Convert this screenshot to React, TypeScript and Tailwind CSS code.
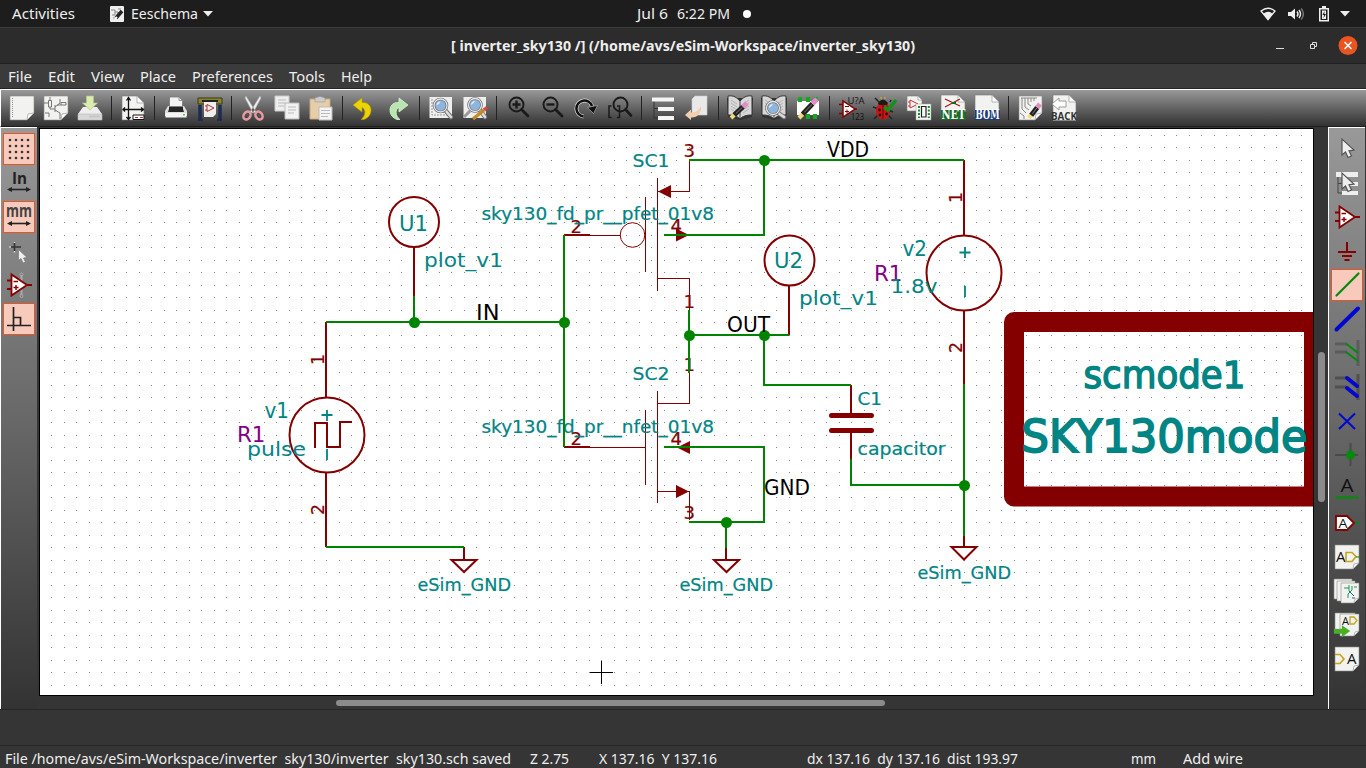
import React from "react";

const RED = "#840000";
const GREEN = "#008400";
const TEAL = "#008484";

function Ico({ children }: { children: React.ReactNode }) {
  return (
    <svg viewBox="0 0 26 26" className="h-[26px] w-[26px] shrink-0 overflow-visible" fill="none">
      {children}
    </svg>
  );
}

function Page({ x = 1, y = 1, w = 24, h = 24, fold = 7, fill = "#f2f2f0" }) {
  const r = x + w;
  const b = y + h;
  return (
    <g>
      <path d={`M${x} ${y}H${r}V${b - fold}L${r - fold} ${b}H${x}Z`} fill={fill} stroke="#8a8a88" strokeWidth=".6" />
      <path d={`M${r} ${b - fold}L${r - fold} ${b}L${r - fold + 1} ${b - fold + 1}Z`} fill="#fff" stroke="#999" strokeWidth=".7" />
    </g>
  );
}

function PageTop({ x = 1, y = 1, w = 24, h = 24, fold = 7 }) {
  const r = x + w;
  const b = y + h;
  return (
    <g>
      <path d={`M${x} ${y}H${r - fold}L${r} ${y + fold}V${b}H${x}Z`} fill="#f2f2f0" stroke="#777" strokeWidth=".6" />
      <path d={`M${r - fold} ${y}V${y + fold}H${r}Z`} fill="#fff" stroke="#999" strokeWidth=".7" />
    </g>
  );
}

function Pencil({ x1 = 5, y1 = 22, x2 = 20, y2 = 7, body = "#222" }) {
  const dx = x2 - x1;
  const dy = y2 - y1;
  return (
    <g strokeLinecap="butt">
      <path d={`M${x1} ${y1}L${x1 + dx * 0.25} ${y1 + dy * 0.25}`} stroke="#f2dc7a" strokeWidth="4" />
      <path d={`M${x1 + dx * 0.2} ${y1 + dy * 0.2}L${x1 + dx * 0.75} ${y1 + dy * 0.75}`} stroke={body} strokeWidth="5" />
      <path d={`M${x1 + dx * 0.3} ${y1 + dy * 0.3}L${x1 + dx * 0.72} ${y1 + dy * 0.72}`} stroke="#777" strokeWidth="1" />
      <path d={`M${x1 + dx * 0.75} ${y1 + dy * 0.75}L${x2} ${y2}`} stroke="#e58cc8" strokeWidth="5" />
    </g>
  );
}

function Lens({ x = 12, y = 10, r = 6.5 }) {
  return (
    <g>
      <path d={`M${x + r * 0.7} ${y + r * 0.7}L23 22`} stroke="#777" strokeWidth="4.5" strokeLinecap="round" />
      <path d={`M${x + r * 0.7} ${y + r * 0.7}L23 22`} stroke="#ddd" strokeWidth="2.5" strokeLinecap="round" />
      <circle cx={x} cy={y} r={r} fill="#8fb5df" stroke="#666" strokeWidth="2.6" />
      <circle cx={x} cy={y} r={r} stroke="#e8e8e8" strokeWidth="1.3" />
      <path d={`M${x - 4} ${y}a4 4 0 0 1 4-4a7 7 0 0 1-4 4`} fill="#dcebfa" />
    </g>
  );
}

const Book = () => (
  <g>
    <path d="M0 3L1 22L13 25L25 22L26 3Z" fill="#333" />
    <path d="M1 1C7 0 10 3 13 6C16 3 19 0 25 1V20C19 20 16 21 13 24C10 21 7 20 1 20Z" fill="#d8d8d8" stroke="#333" strokeWidth="1" />
    <path d="M13 6V23" stroke="#444" />
    <path d="M4 5L10 9M4 8L10 12M4 11L10 15M22 5L16 9M22 8L16 12M22 11L16 15M4 14L10 18M22 14L16 18" stroke="#aaa" strokeWidth=".8" />
  </g>
);

const OpAmp = () => (
  <g>
    <path d="M1 8.5H6M1 17H6M18 13H26" stroke={RED} strokeWidth="2" />
    <path d="M5.5 2.5V23.5L21 13Z" fill="#fff" stroke={RED} strokeWidth="1.8" />
    <path d="M7.5 9.5H12M7.5 15.5H12.5M10 13V18" stroke={RED} strokeWidth="1.4" />
  </g>
);

const Arrow = () => (
  <path d="M8 3V19L11.5 16L14 21.5L17.5 20L15 14.8L20 14Z" fill="#eee" stroke="#555" strokeWidth="1.2" />
);

const Label = ({ x, y, s, children, fill = "#111", b = false, w }: { x: number; y: number; s: number; children: string; fill?: string; b?: boolean; w?: number }) => (
  <text x={x} y={y} fontSize={s} fill={fill} fontWeight={b ? 700 : 400} textLength={w} lengthAdjust="spacingAndGlyphs" fontFamily="'Open Sans', sans-serif">
    {children}
  </text>
);

const topIcons: (React.ReactNode | null)[] = [
  <><Page x={1} y={1} w={24} h={24} /><path d="M3.5 3V23" stroke="#777" strokeWidth=".8" strokeDasharray="1 1" /></>,
  <><Page x={1} y={1} w={24} h={24} /><path d="M1 8H6M7 2V5M5.500 5.500H8.500V12H5.500ZM7 12V14H12M12 10V17M12 12L17 8V4M12 15L17 18V24M2 18H6V22M14 10H18M18 7.500H23V10H18Z" stroke="#777" strokeWidth="1" /></>,
  <>
    <path d="M6 12H20L25 19H1Z" fill="#eee" />
    <path d="M1 19H25V25H1Z" fill="#d8d8d8" stroke="#bbb" strokeWidth=".6" />
    <path d="M9.500 1H16.500V8H20.500L13 15L5.500 8H9.500Z" fill="#dcebb0" stroke="#b5c98a" strokeWidth=".7" />
    <path d="M12 21.500H23" stroke="#c6c6c6" strokeWidth="2" />
  </>,
  null,
  <><PageTop x={2} y={1} w={22} h={24} /><path d="M8.500 3V24M2.500 14.500H24M6.500 5.500L8.500 2.500L10.500 5.500M6.500 22L8.500 24.500L10.500 22M5 12.500L3 14.500L5 16.500M21 12.500L23.500 14.500L21 16.500" stroke="#111" strokeWidth="1.300" /><path d="M13 20H24V24.500H13Z" fill="#fff" stroke="#111" /><path d="M15 22.500H18M20 22.500H23" stroke="#a33" /></>,
  null,
  <>
    <path d="M6.500 2H16L19.500 5.500V13H6.500Z" fill="#f3f3f3" stroke="#777" strokeWidth=".8" />
    <path d="M16 2V5.500H19.500" stroke="#999" />
    <path d="M5 11H21L24 16V21H2V16Z" fill="#ddd" />
    <path d="M6 11.500H20V14L21 17H5L6 14Z" fill="#252525" />
    <path d="M2.500 18H23.500V22.500H2.500Z" fill="#f5f5f5" />
    <path d="M20 19H22V20.500H20Z" fill="#6c3" />
  </>,
  <>
    <path d="M3 10V24M23 10V24" stroke="#1d2d50" strokeWidth="3.500" />
    <path d="M1 25H6M20 25H25" stroke="#1d2d50" strokeWidth="2" />
    <path d="M1 3H25V9H1Z" fill="#8a8430" stroke="#3c3a12" />
    <path d="M5 6H21" stroke="#222" strokeWidth="2" />
    <path d="M7 7H19V19L16 22H7Z" fill="#eee" />
    <path d="M10 9.500V16.500L17 13ZM8 11H10M8 15H10" stroke="#a33" />
  </>,
  null,
  <>
    <path d="M6 1L16 17L13 18L5 3ZM20 1L10 17L13 18L21 3Z" fill="#eee" stroke="#aaa" strokeWidth=".6" />
    <ellipse cx="7" cy="20.500" rx="3.300" ry="4.200" transform="rotate(35 7 20.500)" stroke="#e89aa0" strokeWidth="2.500" />
    <ellipse cx="19" cy="20.500" rx="3.300" ry="4.200" transform="rotate(-35 19 20.500)" stroke="#e89aa0" strokeWidth="2.500" />
  </>,
  <><path d="M1 1H15V16H1Z" fill="#eee" stroke="#ccc" /><path d="M4 5H12M4 8H12M4 11H10" stroke="#bbb" /><path d="M11 8H25V24H11Z" fill="#f2f2f2" stroke="#bbb" /><path d="M14 12H22M14 15H22M14 18H20" stroke="#bbb" /></>,
  <><path d="M2 4H22V24H2Z" fill="#e8cda9" stroke="#c4a980" /><path d="M7 3Q12 0 17 3V7H7Z" fill="#ccc" stroke="#999" strokeWidth=".6" /><path d="M11 12H24V25H11Z" fill="#f4f4f4" stroke="#bbb" /><path d="M13 15.500H22M13 18.500H22M13 21.500H20" stroke="#bbb" /></>,
  null,
  <path d="M2 10L11 3V7.500C18 7 20 12 20 15C20 20 17 23 13 24.500H10C15 21 15 14 11 12.500V17Z" fill="#edd400" stroke="#b39b00" strokeWidth=".6" />,
  <path d="M23 10L14 3V7.500C7 7 5 12 5 15C5 20 8 23 12 24.500H15C10 21 10 14 14 12.500V17Z" fill="#b9e6ae" stroke="#d8f4d2" strokeWidth=".8" />,
  null,
  <><path d="M1.500 2H24V23H1.500Z" fill="#eee" /><path d="M4 4V20H20" stroke="#999" strokeDasharray="2 1" /><Lens x={12.5} y={10.5} /></>,
  <><path d="M1.500 2H24V23H1.500Z" fill="#eee" /><path d="M2 22L8 16" stroke="#999" strokeWidth="3" /><Lens x={13} y={10} /><path d="M11 24L22 15" stroke="#c58a2a" strokeWidth="3.500" /><path d="M22 15L25 12.500" stroke="#d44" strokeWidth="3.500" /></>,
  null,
  <><circle cx="11.500" cy="9.500" r="7" stroke="#1a1a1a" strokeWidth="1.900" /><path d="M16.500 14.500L23 21" stroke="#1a1a1a" strokeWidth="2.800" strokeLinecap="round" /><path d="M7.500 9.500H15.500M11.500 5.500V13.500" stroke="#1a1a1a" strokeWidth="2.400" /></>,
  <><circle cx="11.500" cy="9.500" r="7" stroke="#1a1a1a" strokeWidth="1.900" /><path d="M16.500 14.500L23 21" stroke="#1a1a1a" strokeWidth="2.800" strokeLinecap="round" /><path d="M7.500 9.500H15.500" stroke="#1a1a1a" strokeWidth="2.400" /></>,
  <><path d="M10.500 21.500A8 8 0 1 1 19 11" stroke="#ddd" strokeWidth="4" /><path d="M10.500 21.500A8 8 0 1 1 19 11" stroke="#111" strokeWidth="2.500" /><path d="M14.500 12.500L24.500 10.500L20.500 18.500Z" fill="#111" stroke="#ccc" strokeWidth=".5" /></>,
  <><circle cx="13.500" cy="9.500" r="7" stroke="#1a1a1a" strokeWidth="1.900" /><path d="M18.500 14.500L24 20.500" stroke="#1a1a1a" strokeWidth="2.600" strokeLinecap="round" /><path d="M4.500 11H2V22.500H4.500M10 11H12.500V22.500H10" stroke="#1a1a1a" strokeWidth="1.500" /></>,
  null,
  <><path d="M4 6V23H8M4 13.500H8" stroke="#333" /><path d="M2 2.500H24V6.500H2ZM8 12H24V16H8ZM8 21H24V25H8Z" fill="#f5f5f5" /></>,
  <><path d="M11 1H23V20H8V4Z" fill="#e9e9e9" stroke="#ccc" strokeWidth=".6" /><path d="M1 20L7 14.500V17.500C11 18 15 15 17 11C18 18 13 23 7 22.500V25Z" fill="#f1cfae" /></>,
  null,
  <><Book /><Pencil x1={4} y1={23} x2={20} y2={8} /></>,
  <><Book /><Lens x={12} y={13} r={6.5} /></>,
  <><path d="M2 6H24V20H2Z" fill="#fff" /><path d="M3 2H7V7H3ZM11 2H15V7H11ZM19 2H23V7H19ZM11 19H15V24H11ZM18 19H22V24H18Z" fill="#14a81e" /><Pencil x1={4} y1={23} x2={22} y2={4} /></>,
  null,
  <><path d="M1 9.500H6M1 18.500H6M16 14H19" stroke={RED} strokeWidth="1.500" /><path d="M5 6V22L17 14Z" fill="#fff" stroke={RED} strokeWidth="1.500" /><path d="M7 11.500H11M7 16.500H11M9 14.500V18.500" stroke={RED} /><Label x={9.500} y={8.500} s={9.500} w={17}>U?A</Label><Label x={13} y={25} s={9.500} w={13}>123</Label></>,
  <>
    <path d="M1 12L7 14M2 24L7 19M20 24L15 19M3 3L8 8M18 7L19 5M21 17L16 15" stroke="#222" strokeWidth="1.500" />
    <ellipse cx="11" cy="16" rx="7" ry="8.500" fill="#d41212" />
    <path d="M6 8Q11 1 16 8L15 10H7Z" fill="#1a1a1a" /><path d="M11 9V24" stroke="#5b0808" /><path d="M9 4V2M13 4V2" stroke="#dcb400" />
    <circle cx="7.500" cy="15" r="1.400" fill="#111" /><circle cx="14.500" cy="19" r="1.400" fill="#111" /><circle cx="8" cy="20" r="1.400" fill="#111" /><circle cx="13.500" cy="13" r="1.200" fill="#111" />
    <path d="M12 12L16 15L24 5" stroke="#11921b" strokeWidth="3.500" />
  </>,
  <><PageTop x={1} y={1} w={15} h={15} fold={4} /><path d="M4 5V13L12 9ZM2 7H4M2 11H4" stroke="#c33" /><path d="M10 9H25V25H10Z" fill="#fafafa" stroke="#999" strokeWidth=".5" /><path d="M15.500 11.500H20V22H15.500Z" stroke="#222" strokeWidth="1.200" /><path d="M13 11V23M22.800 11V23" stroke="#14901c" strokeWidth="2" strokeDasharray="2 1.500" /></>,
  <><PageTop x={1} y={0} w={24} h={22} /><path d="M5 4L20 11M5 12L20 4" stroke="#a11" strokeWidth="1.100" /><path d="M12 8H16" stroke="#070" strokeWidth="2" /><path d="M1 15H26V25H1Z" fill="#1c6b2a" /><text x="1.500" y="24" fontSize="12" fontWeight="700" fill="#fff" textLength="24" lengthAdjust="spacingAndGlyphs" fontFamily="'DejaVu Serif', serif">NET</text></>,
  <><PageTop x={1} y={0} w={24} h={22} /><path d="M1 15H26V25H1Z" fill="#1d3c76" /><text x="1.500" y="24" fontSize="12" fontWeight="700" fill="#fff" textLength="24" lengthAdjust="spacingAndGlyphs" fontFamily="'DejaVu Serif', serif">BOM</text></>,
  null,
  <><Page x={2} y={1} w={23} h={24} /><path d="M5 3V14L9 18M8 3V12L12 15M11 3V9L14 11M14 3V7M17 3V6M3 18L7 21V24M4 3H20" stroke="#888" /><Pencil x1={12} y1={23} x2={23} y2={9} /></>,
  <><PageTop x={2} y={0} w={23} h={25.5} /><path d="M1 9L8 3V6H15V12H8V15Z" fill="#fff" stroke="#888" strokeWidth=".8" /><Label x={0} y={25} s={10.500} w={26} b fill="#333">BACK</Label></>,
];

const leftIcons: { on?: boolean; art: React.ReactNode }[] = [
  { on: true, art: <>{[4, 10, 16, 22].map((y) => [4, 10, 16, 22].map((x) => <circle key={`${x}-${y}`} cx={x} cy={y} r="1.300" fill="#333" />))}</> },
  { art: <><Label x={6} y={14} s={16} b w={15} fill="#222">In</Label><path d="M3 19.500H23" stroke="#222" strokeWidth="1.600" /><path d="M1 19.500L6 17V22ZM25 19.500L20 17V22Z" fill="#222" /></> },
  { on: true, art: <><Label x={0} y={13} s={17} b w={26} fill="#444">mm</Label><path d="M3 19.500H23" stroke="#222" strokeWidth="1.600" /><path d="M1 19.500L6 17V22ZM25 19.500L20 17V22Z" fill="#222" /></> },
  { art: <><path d="M3 9H15M8.500 4V14" stroke="#333" strokeWidth="1.600" /><path d="M3 9H5M8.500 4V5M8.500 13V14.500" stroke="#ddd" strokeWidth="1.600" /><path d="M12.500 11.500V22.500L15 20.500L17 25L19.500 24L17.500 20L21 19.500Z" fill="#eee" stroke="#777" strokeWidth=".7" /></> },
  { art: <><path d="M15.500 3V23" stroke="#aaa" strokeWidth="2" /><circle cx="15.500" cy="2.500" r="1.500" stroke="#aaa" /><circle cx="15.500" cy="24" r="1.500" stroke="#aaa" /><OpAmp /></> },
  { on: true, art: <path d="M7.500 1V25M1 19.500H25M7.500 11.500H14.500V19" stroke="#222" strokeWidth="1.700" /> },
];

const rightIcons: { on?: boolean; art: React.ReactNode }[] = [
  { art: <Arrow /> },
  { art: <><path d="M4 6V23H8M4 13.500H8" stroke="#444" /><path d="M2 2H24V7H2ZM8 12H24V16H8ZM8 21H24V25H8Z" fill="#eee" /><Arrow /></> },
  { art: <OpAmp /> },
  { art: <path d="M13 4V13M4 14H22M8 18H18M10.500 22H15.500" stroke={RED} strokeWidth="2" /> },
  { on: true, art: <path d="M2.500 23.500L24.500 1.500" stroke="#008c08" strokeWidth="2.200" strokeLinecap="round" /> },
  { art: <path d="M2.500 23.500L24 2.500" stroke="#0008d0" strokeWidth="4" strokeLinecap="round" /> },
  { art: <><path d="M1 4H13M1 12H13M24 0V26" stroke="#5c5c5c" strokeWidth="3" /><path d="M12 3.500L24 13M12 12L24 21" stroke="#008c08" strokeWidth="2" /></> },
  { art: <><path d="M1 4H13M1 13H13M24 0V26" stroke="#505050" strokeWidth="3" /><path d="M13 4L23 12M13 14L23 22" stroke="#0008d0" strokeWidth="4" strokeLinecap="round" /></> },
  { art: <path d="M5 5.500L21 21M21 5.500L5 21" stroke="#0008d0" strokeWidth="2" /> },
  { art: <><path d="M1 13H24M16.500 1V24" stroke="#4a4a4a" strokeWidth="2" /><circle cx="16.500" cy="13" r="4.500" fill="#008c08" /></> },
  { art: <><Label x={6.500} y={16} s={19} w={13}>A</Label><path d="M1.500 21.500H24.500" stroke="#008c08" strokeWidth="2.200" /></> },
  { art: <><path d="M20 13H26" stroke="#008c08" strokeWidth="1.500" /><path d="M2 6H13L20 13L13 20H2Z" fill="#fff" stroke={RED} strokeWidth="1.800" /><Label x={4.500} y={18} s={13.500} w={9}>A</Label></> },
  { art: <><Page x={1} y={1} w={24} h={24} fold={6} /><Label x={2} y={18} s={14} w={9.500}>A</Label><path d="M12 8.500H18L22 12.500L18 17.500H12Z" stroke="#c6a41c" strokeWidth="1.600" /><path d="M22 13H26" stroke="#008c08" /></> },
  { art: <><Page x={0} y={1} w={18} h={20} fold={4} /><path d="M4 3V7M5 3V12" stroke="#b44" /><Page x={3} y={3} w={18} h={20} fold={4} /><Page x={7} y={5} w={18} h={20} fold={5} /><path d="M10 10H15M20 9H23M15 7V13M18 8V12L14 16V20" stroke="#1a9a50" /><path d="M15 13L20 18M18 20H21" stroke="#268" /></> },
  { art: <><Page x={1} y={1} w={20} h={20} fold={4} /><Page x={6} y={2} w={19} h={22} fold={5} /><Label x={8} y={12.500} s={10} w={7}>A</Label><path d="M16 5H20L23 8.500L20 12H16Z" stroke="#c6a41c" strokeWidth="1.300" /><path d="M0 17H8V13.500L16 19L8 25V21.500H0Z" fill="#4caf1c" stroke="#3a8" strokeWidth=".3" /></> },
  { art: <><Page x={1} y={1} w={24} h={24} fold={6} /><path d="M1 8.500H6L10 13L6 17.500H1" stroke="#c6a41c" strokeWidth="1.600" /><Label x={13} y={18} s={14} w={9.500}>A</Label></> },
];

function SideBar({ items }: { items: { on?: boolean; art: React.ReactNode }[] }) {
  return (
    <div className="flex h-full w-[37px] flex-col items-center border-l border-t border-white bg-linear-to-b from-[#999999] via-[#686868] to-[#333333] pt-[4px]">
      {items.map((it, i) => (
        <div key={i} className="flex h-[34px] w-full shrink-0 items-center justify-center">
          <div className={it.on ? "flex h-[32px] w-[32px] items-center justify-center border border-[#e95420] bg-[#f8cabb]" : "flex h-[32px] w-[32px] items-center justify-center"}>
            <Ico>{it.art}</Ico>
          </div>
        </div>
      ))}
    </div>
  );
}

/* Schematic text: x is the left edge, y the baseline, w the drawn width. */
function T({ x, y, w, s = 17.5, c = TEAL, sw = 0.2, children }: { x: number; y: number; w: number; s?: number; c?: string; sw?: number; children: string }) {
  return (
    <text x={x} y={y} fontSize={s} fill={c} stroke={c} strokeWidth={sw} textLength={w} lengthAdjust="spacingAndGlyphs">
      {children}
    </text>
  );
}

function Rot({ x, y, children }: { x: number; y: number; children: string }) {
  return (
    <text fontSize="18.500" fill={RED} stroke={RED} strokeWidth=".2" transform={`translate(${x} ${y}) rotate(-90)`} textLength="11" lengthAdjust="spacingAndGlyphs">
      {children}
    </text>
  );
}

function Schematic() {
  return (
    <svg viewBox="40 129 1273 566" className="block h-[566px] w-[1273px] bg-white" fill="none" fontFamily="'DejaVu Sans', sans-serif">
      <defs>
        <pattern id="grid" width="25" height="25" patternUnits="userSpaceOnUse">
          <path d="M1 10h1v1h-1zM14 10h1v1h-1zM1 22h1v1h-1zM14 22h1v1h-1z" fill="#848484" shapeRendering="crispEdges" />
        </pattern>
      </defs>
      <rect x="40" y="129" width="1273" height="566" fill="url(#grid)" />

      <g stroke={RED} strokeWidth="1" shapeRendering="crispEdges">
        <path d="M645.500 197V272M657.500 178V291M657 191.500H689.500V160M657 278.500H689.500V310M590 235.500H620" />
        <path d="M645.500 410V485M657.500 391V503M657 403.500H689.500V373M657 491.500H689.500V520M590 447.500H645" />
      </g>
      <circle cx="632.500" cy="235" r="12.300" stroke={RED} />
      <path d="M658 191.500L671 185V198ZM689 235L676 228.500V241.500ZM677 447.500L690 441V454ZM689 491.500L676 485V498Z" fill={RED} />

      <g stroke={RED} strokeWidth="2">
        <path d="M564 235H590M564 447H590M414 247V296M789 285V335M326 322V397M326 472V547M464 547V560M726 548V560M964 536V547M964 160V235M964 310V384M851 385V414M851 432V459" />
        <path d="M451.500 560H476.500L464 572ZM714 560H739L726.500 572ZM951.500 547H976.500L964 559.500Z" />
        <circle cx="414" cy="222" r="25" />
        <circle cx="789.500" cy="260.500" r="25" />
        <circle cx="327" cy="435" r="37.500" />
        <circle cx="964" cy="273" r="37.500" />
        <path d="M315 448V423H327V447H340V422H352" />
      </g>
      <path d="M831.500 415.500H871.500M831.500 430.500H871.500" stroke={RED} strokeWidth="5" strokeLinecap="round" />
      <rect x="1014" y="322" width="300" height="174.500" stroke={RED} strokeWidth="20" strokeLinejoin="round" />

      <T x={683.500} y={157} w={11.500} c={RED}>3</T>
      <T x={683.500} y={308} w={11.500} c={RED}>1</T>
      <T x={670.500} y={232} w={11.500} c={RED}>4</T>
      <T x={570.500} y={233} w={11.500} c={RED}>2</T>
      <T x={683.500} y={371} w={11.500} c={RED}>1</T>
      <T x={683.500} y={519} w={11.500} c={RED}>3</T>
      <T x={670.500} y={445} w={11.500} c={RED}>4</T>
      <T x={570.500} y={445} w={11.500} c={RED}>2</T>
      <Rot x={324} y={365}>1</Rot>
      <Rot x={324} y={515}>2</Rot>
      <Rot x={962} y={203}>1</Rot>
      <Rot x={962} y={353}>2</Rot>

      <T x={632.500} y={166.500} w={37}>SC1</T>
      <T x={632.500} y={379.500} w={37}>SC2</T>
      <T x={481.500} y={220} w={232.500}>sky130_fd_pr__pfet_01v8</T>
      <T x={481.500} y={433} w={232.500}>sky130_fd_pr__nfet_01v8</T>
      <T x={399} y={231} w={29} s={21.500} sw={0}>U1</T>
      <T x={774} y={268} w={29} s={21.500} sw={0}>U2</T>
      <T x={424} y={267} w={79} s={19.500} sw={0}>plot_v1</T>
      <T x={799} y={305} w={79} s={19.500} sw={0}>plot_v1</T>
      <T x={264.500} y={418} w={24.500} s={20.500} sw={0}>v1</T>
      <T x={902.500} y={256} w={24.500} s={20.500} sw={0}>v2</T>
      <T x={237} y={442} w={28.500} s={20.500} sw={0} c="#840084">R1</T>
      <T x={874} y={281} w={28.500} s={20.500} sw={0} c="#840084">R1</T>
      <T x={247} y={455.500} w={59} s={19.500} sw={0}>pulse</T>
      <T x={890.500} y={293} w={47} s={19.500} sw={0}>1.8v</T>
      <T x={857.500} y={405} w={24.500}>C1</T>
      <T x={857.500} y={455} w={88} s={18}>capacitor</T>
      <T x={417.500} y={591} w={93.500}>eSim_GND</T>
      <T x={679.500} y={591} w={93.500}>eSim_GND</T>
      <T x={917.500} y={579} w={93.500}>eSim_GND</T>
      <path d="M321.500 415H332.500M327 410V421M327 449V460M959.500 252.500H970.500M965 247V258M965 286V297" stroke={TEAL} strokeWidth="1.800" />
      <T x={1083.500} y={388} w={162} s={37} sw={1.4}>scmode1</T>
      <T x={1021.500} y={452} w={286} s={45} sw={1.8}>SKY130mode</T>

      <path d="M326 322H564M414 296V322M564 235V447M326 547H464M689 160H964M764 160V235H664M689 310V373M689 335H789M764 335V385H851M851 459V485H964M964 384V536M664 447H764V522H689M726 522V548" stroke={GREEN} strokeWidth="2" />
      {[[764, 160], [414, 322], [564, 322], [689, 335], [764, 335], [726, 522], [964, 485]].map(([x, y]) => (
        <circle key={`${x}-${y}`} cx={x + 0.5} cy={y + 0.5} r="5.500" fill={GREEN} />
      ))}
      <T x={476} y={320} w={23.500} s={21.500} sw={0} c="#000">IN</T>
      <T x={727} y={332} w={43} s={21.500} sw={0} c="#000">OUT</T>
      <T x={827} y={157} w={42} s={21.500} sw={0} c="#000">VDD</T>
      <T x={764} y={495} w={46} s={21.500} sw={0} c="#000">GND</T>
      <path d="M590 672.500H613M601.500 661V684" stroke="#000" shapeRendering="crispEdges" />
    </svg>
  );
}

function Run({ w, children, bold }: { w: number; children: string; bold?: boolean }) {
  return (
    <svg width={w} height="22" className="shrink-0 overflow-visible" fill="#eeeeee">
      <text x="0" y="16" fontSize="14.500" fontWeight={bold ? 700 : 400} textLength={w} lengthAdjust="spacingAndGlyphs" fontFamily="'Noto Sans', sans-serif" className="whitespace-pre">
        {children}
      </text>
    </svg>
  );
}

const menus: [string, number][] = [["File", 24], ["Edit", 27], ["View", 33], ["Place", 36], ["Preferences", 81], ["Tools", 36], ["Help", 31]];

export default function App() {
  return (
    <div className="flex h-[768px] w-[1366px] flex-col overflow-hidden bg-[#353535] text-[#eeeeee]">
      <header className="flex h-[28px] shrink-0 items-center border-b border-[#3c3c3c] bg-[#1d1d1d] pl-[12px] pr-[16px]">
        <Run w={63}>Activities</Run>
        <svg viewBox="0 0 16 16" className="ml-[34px] h-[16px] w-[16px]">
          <rect x="1" y="0" width="14" height="16" rx="1" fill="#eee" />
          <path d="M2 4H6V9H3M6 6H9V12H4M9 3H12" stroke="#888" fill="none" />
          <path d="M7 12L13 5" stroke="#222" strokeWidth="3.500" />
          <path d="M6 13L8 11" stroke="#fff" strokeWidth="2" />
        </svg>
        <div className="ml-[6px]"><Run w={67}>Eeschema</Run></div>
        <svg viewBox="0 0 10 6" className="ml-[5px] h-[6px] w-[10px]"><path d="M0 0H10L5 5.500Z" fill="#eee" /></svg>
        <div className="ml-[424px] flex items-center">
          <Run w={31}>Jul 6</Run>
          <div className="ml-[9px]"><Run w={53}>6:22 PM</Run></div>
          <div className="ml-[13px] h-[8px] w-[8px] rounded-full bg-white" />
        </div>
        <div className="ml-auto flex items-center">
          <svg viewBox="0 0 16 14" className="h-[14px] w-[16px]" fill="none" stroke="#eee" strokeWidth="1.300">
            <path d="M1 4Q8-1.500 15 4L8 12.500Z" />
            <path d="M4 7Q8 4 12 7L8 12.500Z" fill="#eee" />
          </svg>
          <svg viewBox="0 0 16 14" className="ml-[12px] h-[14px] w-[16px]" fill="none" stroke="#eee" strokeWidth="1.400">
            <path d="M0 5H3L7 1.500V12.500L3 9H0Z" fill="#eee" stroke="none" />
            <path d="M9 4.500Q11 7 9 9.500M11 3Q14 7 11 11" />
            <path d="M13.200 1.500Q17.500 7 13.200 12.500" stroke="#777" />
          </svg>
          <svg viewBox="0 0 12 16" className="ml-[14px] h-[16px] w-[12px]">
            <path d="M4 0H8V2H11V15.500H1V2H4Z" fill="#eee" />
            <path d="M2.500 3.500H9.500V14H2.500Z" fill="#1d1d1d" />
            <path d="M4 4.500H8V13H4Z" fill="#eee" />
            <path d="M6.500 5L4.500 9H6L5.500 12L8 8H6.300Z" fill="#1d1d1d" />
          </svg>
          <svg viewBox="0 0 10 6" className="ml-[10px] h-[6px] w-[10px]"><path d="M0 0H10L5 5.500Z" fill="#eee" /></svg>
        </div>
      </header>

      <div className="flex h-[36px] shrink-0 items-center border-b border-[#202020] bg-[#2c2c2c] pl-[451px] pr-[8px]">
        <Run w={464} bold>[ inverter_sky130 /] (/home/avs/eSim-Workspace/inverter_sky130)</Run>
        <div className="ml-auto flex items-center">
          <div className="mt-[5px] h-px w-[8px] bg-[#dddddd]" />
          <svg viewBox="0 0 9 9" className="ml-[25px] h-[9px] w-[9px]" fill="none" stroke="#ddd">
            <path d="M1.500 3.500H5.500V7.500H1.500ZM3.500 3V1.500H7.500V5.500H6" />
          </svg>
          <svg viewBox="0 0 20 20" className="ml-[20px] h-[20px] w-[20px]">
            <circle cx="10" cy="9.500" r="9.500" fill="#e95420" />
            <path d="M6.500 6L13.500 13M13.500 6L6.500 13" stroke="#fff" strokeWidth="1.600" />
          </svg>
        </div>
      </div>

      <nav className="flex h-[25px] shrink-0 items-center gap-[16px] border-b border-[#242424] bg-[#3b3b3b] pl-[8px] pt-[2px]">
        {menus.map(([m, w]) => <Run key={m} w={w}>{m}</Run>)}
      </nav>

      <div className="flex h-[38px] shrink-0 items-center border-b border-l border-t border-b-[#1f1f1f] border-l-white border-t-white bg-linear-to-b from-[#999999] to-[#333333] pl-[4px]">
        {topIcons.map((art, i) =>
          art === null ? (
            <div key={i} className="flex w-[9px] shrink-0 justify-center"><div className="h-[24px] w-px bg-[#222222]" /></div>
          ) : (
            <div key={i} className="flex h-[34px] w-[34px] shrink-0 items-center justify-center"><Ico>{art}</Ico></div>
          ),
        )}
      </div>

      <div className="flex h-[582px] shrink-0 bg-[#353535]">
        <SideBar items={leftIcons} />
        <div className="ml-[2px] flex w-[1289px] flex-col pt-px">
          <div className="flex h-[568px]">
            <div className="border border-[#000000]"><Schematic /></div>
            <div className="flex w-[14px] justify-center pt-[224px]"><div className="h-[150px] w-[7px] rounded-full bg-[#8b8b8b]" /></div>
          </div>
          <div className="flex h-[13px] pl-[297px] pt-[4px]"><div className="h-[6px] w-[549px] rounded-full bg-[#8b8b8b]" /></div>
        </div>
        <div className="flex w-[38px]"><SideBar items={rightIcons} /></div>
      </div>

      <div className="h-[37px] shrink-0 border-b border-t border-[#262626] bg-[#353535]" />
      <footer className="flex h-[22px] shrink-0 items-center pl-[5px] pt-[3px]">
        <Run w={506}>File /home/avs/eSim-Workspace/inverter  sky130/inverter  sky130.sch saved</Run>
        <div className="ml-[19px]"><Run w={39}>Z 2.75</Run></div>
        <div className="ml-[30px]"><Run w={118}>X 137.16  Y 137.16</Run></div>
        <div className="ml-[90px]"><Run w={211}>dx 137.16  dy 137.16  dist 193.97</Run></div>
        <div className="ml-[113px]"><Run w={25}>mm</Run></div>
        <div className="ml-[27px]"><Run w={60}>Add wire</Run></div>
      </footer>
    </div>
  );
}
